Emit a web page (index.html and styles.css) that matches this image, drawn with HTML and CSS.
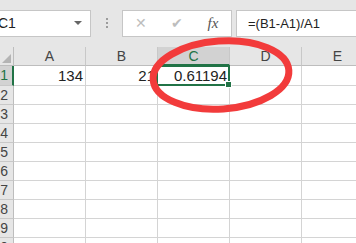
FILE: index.html
```html
<!DOCTYPE html>
<html lang="en">
<head>
    <meta charset="UTF-8">
    <title>Sheet</title>
    <link rel="stylesheet" href="styles.css">
</head>
<body>
    <div class="toolbar">
        <div class="namebox">
            <span class="name">C1</span>
            <span class="arrow"></span>
        </div>
        <div class="dots"><i></i><i></i><i></i></div>
        <div class="fbuttons">
            <span class="btn cancel">&#x2715;</span>
            <span class="btn enter">&#x2714;</span>
            <span class="btn fx">fx</span>
        </div>
        <div class="formula">=(B1-A1)/A1</div>
    </div>

    <div class="grid">
        <div class="corner"><span class="tri"></span></div>
        <div class="colhead">A</div>
        <div class="colhead">B</div>
        <div class="colhead sel">C</div>
        <div class="colhead">D</div>
        <div class="colhead">E</div>

        <div class="rowhead sel first">1</div>
        <div class="cell first">134</div>
        <div class="cell first">21</div>
        <div class="cell first active">0.61194<span class="handle"></span></div>
        <div class="cell first"></div>
        <div class="cell first"></div>

        <div class="rowhead">2</div><div class="cell"></div><div class="cell"></div><div class="cell"></div><div class="cell"></div><div class="cell"></div>
        <div class="rowhead">3</div><div class="cell"></div><div class="cell"></div><div class="cell"></div><div class="cell"></div><div class="cell"></div>
        <div class="rowhead">4</div><div class="cell"></div><div class="cell"></div><div class="cell"></div><div class="cell"></div><div class="cell"></div>
        <div class="rowhead">5</div><div class="cell"></div><div class="cell"></div><div class="cell"></div><div class="cell"></div><div class="cell"></div>
        <div class="rowhead">6</div><div class="cell"></div><div class="cell"></div><div class="cell"></div><div class="cell"></div><div class="cell"></div>
        <div class="rowhead">7</div><div class="cell"></div><div class="cell"></div><div class="cell"></div><div class="cell"></div><div class="cell"></div>
        <div class="rowhead">8</div><div class="cell"></div><div class="cell"></div><div class="cell"></div><div class="cell"></div><div class="cell"></div>
        <div class="rowhead">9</div><div class="cell"></div><div class="cell"></div><div class="cell"></div><div class="cell"></div><div class="cell"></div>
        <div class="rowhead">10</div><div class="cell"></div><div class="cell"></div><div class="cell"></div><div class="cell"></div><div class="cell"></div>
    </div>

    <!-- red hand-drawn mark over C1 -->
    <svg class="mark" width="356" height="243" viewBox="0 0 356 243">
        <ellipse cx="221" cy="75" rx="68" ry="34" transform="rotate(-4 221 75)"
                 fill="none" stroke="#f23b3b" stroke-width="7"/>
    </svg>
</body>
</html>
```

FILE: styles.css
```css
body {
    margin: 0;
    width: 356px;
    height: 243px;
    overflow: hidden;
    position: relative;
    background-color: #e6e6e6;
    font-family: "Liberation Sans", Arial, sans-serif;
    color: #222;
}
.toolbar {
    display: flex;
    align-items: center;
    height: 47px;
    padding-top: 10px;
    padding-bottom: 11px;
    box-sizing: border-box;
}
.namebox {
    margin-left: -40px;
    width: 131px;
    height: 27px;
    box-sizing: border-box;
    background: #fff;
    border: 1px solid #c6c6c6;
    display: flex;
    align-items: center;
    padding-left: 37px;
    font-size: 14px;
}
.name {
    flex: 1;
}
.arrow {
    width: 0;
    height: 0;
    margin-right: 8px;
    border-left: 4px solid transparent;
    border-right: 4px solid transparent;
    border-top: 4px solid #666;
}
.dots {
    width: 31px;
    display: flex;
    flex-direction: column;
    align-items: center;
    gap: 2px;
}
.dots i {
    width: 2px;
    height: 2px;
    background: #9c9c9c;
}
.fbuttons {
    width: 110px;
    height: 27px;
    box-sizing: border-box;
    background: #fff;
    border: 1px solid #c6c6c6;
    display: flex;
    align-items: center;
}
.btn {
    width: 36px;
    text-align: center;
    color: #bdbdbd;
    font-size: 14px;
}
.fx {
    color: #555;
    font-family: "Liberation Serif", serif;
    font-style: italic;
    font-size: 15px;
}
.formula {
    margin-left: 4px;
    flex: 1;
    margin-right: -20px;
    height: 27px;
    box-sizing: border-box;
    background: #fff;
    border: 1px solid #c6c6c6;
    padding-left: 11px;
    line-height: 25px;
    font-size: 13px;
}
.grid {
    display: grid;
    grid-template-columns: 26px repeat(5, 72px);
    grid-template-rows: 19px 20px repeat(9, 19px);
    margin-left: -12px;
    background: #fff;
    font-size: 14px;
}
.corner, .colhead, .rowhead {
    background: #e6e6e6;
    color: #444;
    border-right: 1px solid #bdbdbd;
    border-bottom: 1px solid #bdbdbd;
    box-sizing: border-box;
}
.corner {
    position: relative;
}
.tri {
    position: absolute;
    right: 2px;
    bottom: 2px;
    width: 0;
    height: 0;
    border-left: 9px solid transparent;
    border-bottom: 9px solid #b4b4b4;
}
.colhead {
    text-align: center;
    line-height: 18px;
    border-right-color: #c8c8c8;
}
.colhead.sel {
    background: #d2d2d2;
    color: #217346;
    border-bottom: 2px solid #217346;
}
.rowhead {
    text-align: right;
    padding-right: 5px;
    line-height: 18px;
    border-bottom-color: #c8c8c8;
}
.rowhead.sel {
    background: #d2d2d2;
    color: #217346;
    border-right: 2px solid #217346;
    padding-right: 4px;
}
.cell {
    border-right: 1px solid #d4d4d4;
    border-bottom: 1px solid #d4d4d4;
    box-sizing: border-box;
    text-align: right;
    padding-right: 2px;
    line-height: 18px;
    position: relative;
}
.cell.first {
    line-height: 20px;
    font-size: 15px;
}
.active::after {
    content: "";
    position: absolute;
    left: -2px;
    top: -1px;
    right: -1px;
    bottom: -1px;
    border: 2px solid #217346;
}
.handle {
    position: absolute;
    right: -3px;
    bottom: -3px;
    width: 5px;
    height: 5px;
    background: #217346;
    border: 1px solid #fff;
    z-index: 1;
}
.mark {
    position: absolute;
    left: 0;
    top: 0;
    pointer-events: none;
}
```
